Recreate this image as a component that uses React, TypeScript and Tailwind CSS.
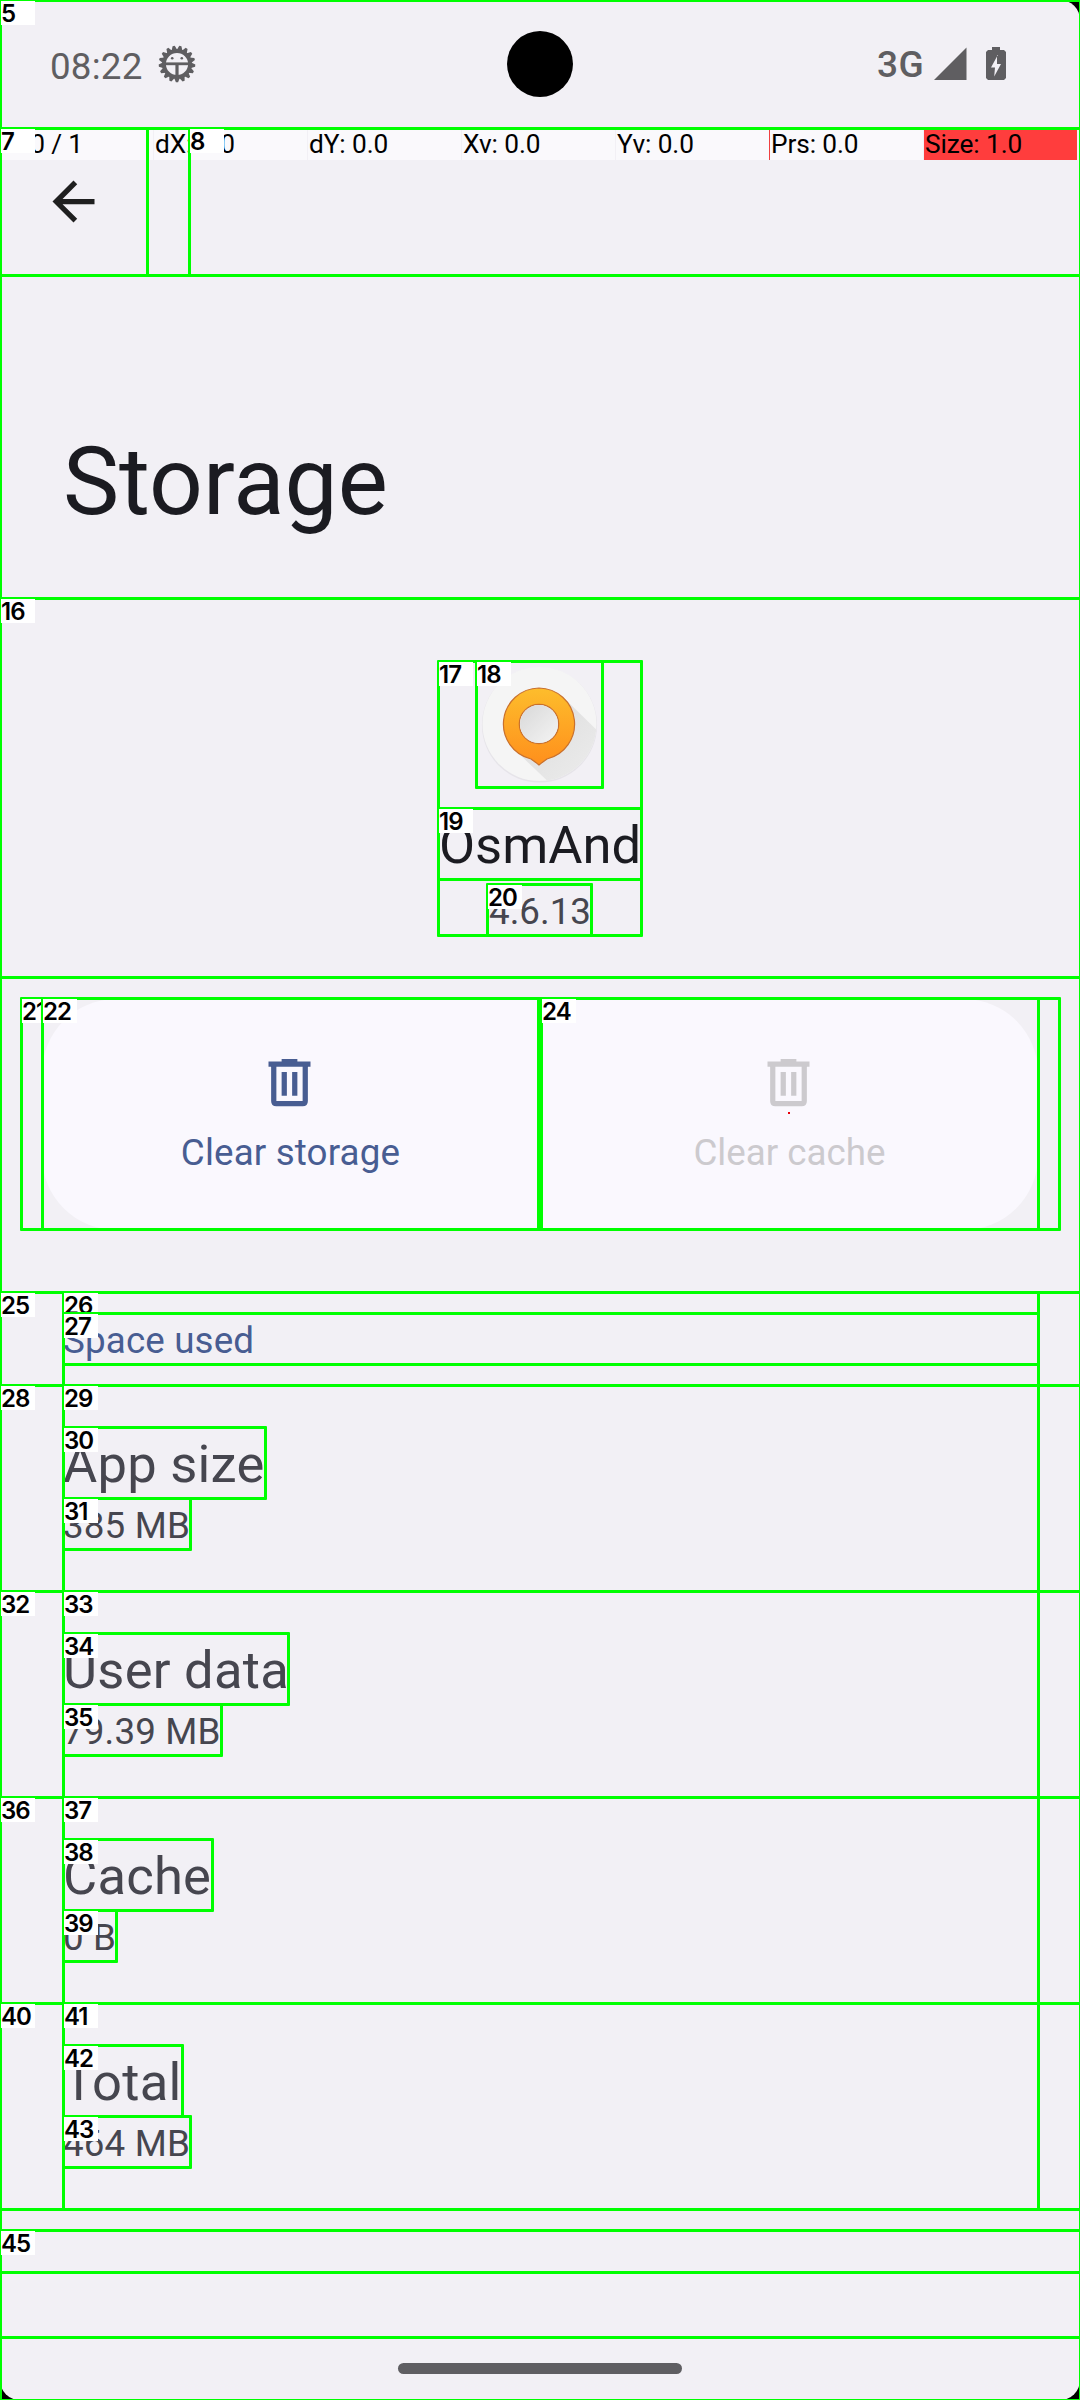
import React from "react";

type Box = { id?: number; x: number; y: number; r: number; b: number };

const boxes: Box[] = [
  { x: 0, y: 0, r: 1080, b: 2400 },
  { id: 5, x: 0, y: 0, r: 1080, b: 128 },
  { x: 0, y: 128, r: 1080, b: 275 },
  { id: 7, x: 0, y: 128, r: 147, b: 275 },
  { id: 8, x: 189, y: 128, r: 1080, b: 275 },
  { id: 16, x: 0, y: 598, r: 1080, b: 977 },
  { id: 17, x: 438, y: 661, r: 641, b: 935 },
  { id: 18, x: 476, y: 661, r: 602, b: 787 },
  { id: 19, x: 438, y: 808, r: 641, b: 879 },
  { id: 20, x: 487, y: 884, r: 591, b: 935 },
  { id: 21, x: 21, y: 998, r: 1059, b: 1229 },
  { id: 22, x: 42, y: 998, r: 538, b: 1229 },
  { id: 24, x: 541, y: 998, r: 1038, b: 1229 },
  { id: 25, x: 0, y: 1292, r: 1080, b: 1385 },
  { id: 26, x: 63, y: 1292, r: 1038, b: 1385 },
  { id: 27, x: 63, y: 1313, r: 1038, b: 1364 },
  { id: 28, x: 0, y: 1385, r: 1080, b: 1591 },
  { id: 29, x: 63, y: 1385, r: 1038, b: 1591 },
  { id: 30, x: 63, y: 1427, r: 265, b: 1498 },
  { id: 31, x: 63, y: 1498, r: 190, b: 1549 },
  { id: 32, x: 0, y: 1591, r: 1080, b: 1797 },
  { id: 33, x: 63, y: 1591, r: 1038, b: 1797 },
  { id: 34, x: 63, y: 1633, r: 288, b: 1704 },
  { id: 35, x: 63, y: 1704, r: 221, b: 1755 },
  { id: 36, x: 0, y: 1797, r: 1080, b: 2003 },
  { id: 37, x: 63, y: 1797, r: 1038, b: 2003 },
  { id: 38, x: 63, y: 1839, r: 212, b: 1910 },
  { id: 39, x: 63, y: 1910, r: 116, b: 1961 },
  { id: 40, x: 0, y: 2003, r: 1080, b: 2209 },
  { id: 41, x: 63, y: 2003, r: 1038, b: 2209 },
  { id: 42, x: 63, y: 2045, r: 182, b: 2116 },
  { id: 43, x: 63, y: 2116, r: 190, b: 2167 },
  { id: 45, x: 0, y: 2230, r: 1080, b: 2272 },
  { x: 0, y: 2337, r: 1080, b: 2400 },
];

function Marker({ box }: { box: Box }) {
  const { id, x, y, r, b } = box;
  return (
    <div
      className="absolute border-[3px] border-[#00ff00] rounded-[1px]"
      style={{ left: x - 1, top: y - 1, width: r - x + 3, height: b - y + 3 }}
    >
      {id !== undefined && (
        <div className="absolute -left-px -top-px h-6 w-[34px] whitespace-nowrap bg-white font-['Inter',sans-serif] text-[24px] font-semibold leading-[25px] tracking-[-0.9px] text-black">
          {id}
        </div>
      )}
    </div>
  );
}

function DebugIcon() {
  const teeth = Array.from({ length: 17 }, (_, i) => (i * 360) / 17 + 10.6);
  return (
    <svg className="size-[38px]" viewBox="-19 -19 38 38" fill="none" stroke="#5f5e61">
      {teeth.map((a) => (
        <path key={a} d="M-3 -13.5L-1.1 -18.3H1.1L3 -13.5Z" transform={`rotate(${a})`} fill="#5f5e61" stroke="none" />
      ))}
      <circle r="13" strokeWidth="3.8" />
      <path d="M-14 -0.2H14" strokeWidth="2.8" />
      <path d="M0 0V15" strokeWidth="3.2" />
      <circle cx="-4.8" cy="-5.8" r="1.3" fill="#5f5e61" stroke="none" />
      <circle cx="4.8" cy="-5.8" r="1.3" fill="#5f5e61" stroke="none" />
    </svg>
  );
}

function StatusBar() {
  return (
    <div className="relative flex h-[129px] items-start justify-between pl-[50px] pr-[74px]">
      <div className="flex pt-[45px] text-[#5f5e61]">
        <span className="w-[108px] text-[36.75px] leading-[43px] tracking-[0.2px]">08:22</span>
        <DebugIcon />
      </div>
      <div className="absolute left-[507px] top-[31px] size-[66px] rounded-full bg-black" />
      <div className="flex pt-[43px] text-[#5f5e61]">
        <span className="w-[57px] text-[37px] font-medium leading-[43px] tracking-[0.4px]">3G</span>
        <svg className="mt-[4px] h-[34px] w-[33px]" viewBox="0 0 33 34">
          <path d="M0 33L32.5 0.5V33Z" fill="currentColor" />
        </svg>
        <svg className="ml-[19px] mt-[4px] h-[33px] w-5" viewBox="0 0 20 33">
          <path d="M6 0H14V3H18L20 5V31L18 33H2L0 31V5L2 3H6Z" fill="currentColor" />
          <path d="M11.8 8L5 20.5H9L8.2 29.5L15 17H11V8Z" fill="#f2f0f5" />
        </svg>
      </div>
    </div>
  );
}

const readings = ["P: 0 / 1", "dX: 0.0", "dY: 0.0", "Xv: 0.0", "Yv: 0.0", "Prs: 0.0", "Size: 1.0"];

function PointerBar() {
  return (
    <div className="flex h-[31px] gap-px text-[26.25px] leading-[31px] text-black">
      {readings.map((text, i) => (
        <div
          key={text}
          className={
            "w-[153px] whitespace-nowrap pl-px tracking-[-0.1px] " +
            (i === 6 ? "bg-[#ff3d3d]" : i === 5 ? "bg-[#faf9fc] shadow-[-1px_0_0_#f04040]" : "bg-[#faf9fc]")
          }
        >
          {text}
        </div>
      ))}
    </div>
  );
}

function AppIcon() {
  return (
    <svg className="size-[126px]" viewBox="0 0 126 126">
      <defs>
        <linearGradient id="pin" x1="0" y1="0" x2="0" y2="1">
          <stop offset="0" stopColor="#fdbd2c" />
          <stop offset="1" stopColor="#ff8f1c" />
        </linearGradient>
        <linearGradient id="shade" x1="0" y1="0" x2="1" y2="1">
          <stop offset="0.2" stopColor="#dedede" />
          <stop offset="0.8" stopColor="#ebebeb" />
        </linearGradient>
        <linearGradient id="hole" x1="0" y1="0" x2="1" y2="1">
          <stop offset="0" stopColor="#d8d8d8" />
          <stop offset="1" stopColor="#f4f4f4" />
        </linearGradient>
        <clipPath id="disc"><circle cx="62.5" cy="63" r="57" /></clipPath>
      </defs>
      <circle cx="62.5" cy="64" r="57.6" fill="#e6e4e9" />
      <circle cx="62.5" cy="63" r="57" fill="#f5f5f5" />
      <path clipPath="url(#disc)" d="M88 38L130 79V130H81L38 89Z" fill="url(#shade)" />
      <path
        fillRule="evenodd"
        d="M62 27A36 36 0 0 1 70 98Q67 100 62 104Q57 100 54 98A36 36 0 0 1 62 27ZM62 43.3A19.7 19.7 0 1 0 62 82.7A19.7 19.7 0 1 0 62 43.3Z"
        fill="url(#pin)"
        stroke="#c9702c"
        strokeWidth="1.2"
      />
      <circle cx="62" cy="63" r="19" fill="url(#hole)" />
    </svg>
  );
}

function TrashIcon() {
  return (
    <svg className="mr-[2px] size-[63px]" viewBox="0 0 24 24" fill="currentColor">
      <path fillRule="evenodd" d="M9 3H15V4H20V6H19V19Q19 21 17 21H7Q5 21 5 19V6H4V4H9ZM7 6V19H17V6ZM9 8H11V17H9ZM13 8H15V17H13Z" />
    </svg>
  );
}

function Row({ title, value }: { title: string; value: string }) {
  return (
    <div className="h-[206px] pl-[63px] pt-[44px] text-[#46464f]">
      <div className="text-[52.5px] leading-[71px] tracking-[0.25px]">{title}</div>
      <div className="text-[36.75px] leading-[51px] tracking-[0.15px]">{value}</div>
    </div>
  );
}

export default function App() {
  return (
    <div className="relative h-[2400px] w-[1080px] overflow-hidden bg-black font-['Roboto',sans-serif] font-normal">
      <div className="flex h-full flex-col rounded-[20px] bg-[#f2f0f5]">
        <StatusBar />
        <PointerBar />
        <div className="h-[116px] pl-[42px] pt-[10px]">
          <svg className="size-[63px]" viewBox="0 0 24 24" fill="#1f1f1f">
            <path d="M20 11H7.83l5.59-5.59L12 4l-8 8 8 8 1.41-1.41L7.83 13H20v-2z" />
          </svg>
        </div>
        <h1 className="h-[323px] pl-[63px] pt-[150px] text-[94.5px] leading-[111px] text-[#1b1b21]">Storage</h1>
        <div className="flex h-[400px] flex-col items-center pt-[62px]">
          <AppIcon />
          <div className="mt-[23px] text-[52.5px] leading-[71px] text-[#1b1b21]">OsmAnd</div>
          <div className="mt-[5px] text-[36.75px] leading-[51px] text-[#46464f]">4.6.13</div>
        </div>
        <div className="flex h-[293px] gap-[2px] px-[42px]">
          <div className="flex h-[231px] w-[497px] flex-col items-center rounded-l-[74px] bg-[#faf8fe] pt-[52px] text-[#485d92]">
            <TrashIcon />
            <div className="mt-[17px] text-[36.75px] leading-[43px] tracking-[0.15px]">Clear storage</div>
          </div>
          <div className="relative flex h-[231px] w-[497px] flex-col items-center rounded-r-[74px] bg-[#faf8fe] pt-[52px] text-[#cccace]">
            <TrashIcon />
            <div className="mt-[17px] text-[36.75px] leading-[43px]">Clear cache</div>
            <div className="absolute left-[247px] top-[113px] size-[2px] bg-red-600" />
          </div>
        </div>
        <div className="h-[93px] pl-[63px] pt-[23px] text-[36.75px] leading-[51px] tracking-[0.15px] text-[#485d92]">Space used</div>
        <Row title="App size" value="385 MB" />
        <Row title="User data" value="79.39 MB" />
        <Row title="Cache" value="0 B" />
        <Row title="Total" value="464 MB" />
        <div className="mx-auto mt-auto mb-[26px] h-[11px] w-[284px] rounded-full bg-[#5f5e62]" />
      </div>
      {boxes.map((box, i) => (
        <Marker key={i} box={box} />
      ))}
    </div>
  );
}
